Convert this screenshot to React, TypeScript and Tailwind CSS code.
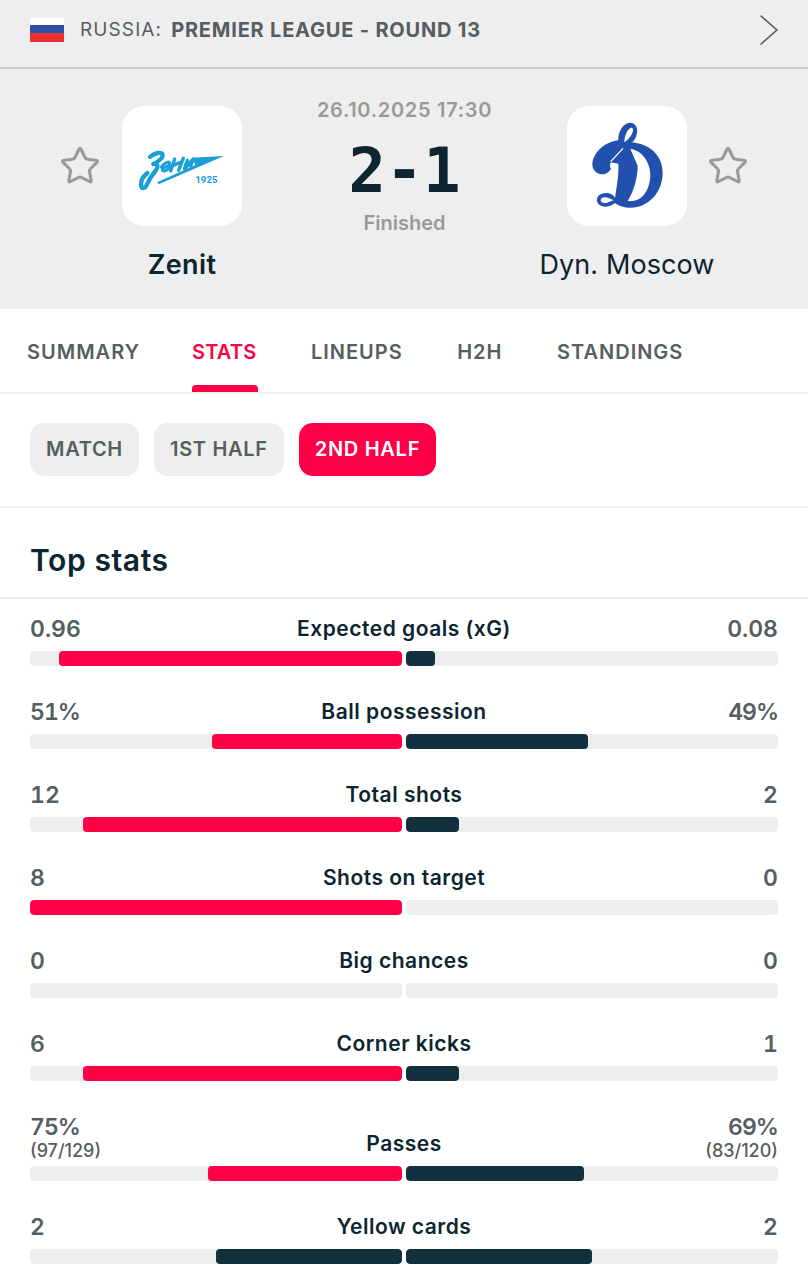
import { Star } from 'lucide-react'
import type { ReactNode } from 'react'

type Stat = {
  label: string
  home: string
  away: string
  homeSub?: string
  awaySub?: string
  homeWidth: number
  awayWidth: number
  homeDark?: boolean
}

const STATS: Stat[] = [
  { label: 'Expected goals (xG)', home: '0.96', away: '0.08', homeWidth: 343, awayWidth: 29 },
  { label: 'Ball possession', home: '51%', away: '49%', homeWidth: 190, awayWidth: 182 },
  { label: 'Total shots', home: '12', away: '2', homeWidth: 319, awayWidth: 53 },
  { label: 'Shots on target', home: '8', away: '0', homeWidth: 372, awayWidth: 0 },
  { label: 'Big chances', home: '0', away: '0', homeWidth: 0, awayWidth: 0 },
  { label: 'Corner kicks', home: '6', away: '1', homeWidth: 319, awayWidth: 53 },
  { label: 'Passes', home: '75%', away: '69%', homeSub: '(97/129)', awaySub: '(83/120)', homeWidth: 194, awayWidth: 178 },
  { label: 'Yellow cards', home: '2', away: '2', homeWidth: 186, awayWidth: 186, homeDark: true },
]

const TABS = ['SUMMARY', 'STATS', 'LINEUPS', 'H2H', 'STANDINGS']

function ZenitLogo() {
  return (
    <svg viewBox="6 3 360 360" className="h-[120px] w-[120px]">
      <g fill="none" stroke="#1c9fd9" strokeLinecap="round" strokeLinejoin="round">
        <path d="M90 156 C102 144 126 138 128 150 C129 162 112 171 100 177 C114 174 116 186 106 198 C94 212 86 226 80 240 C75 252 64 252 63 240 C62 228 70 214 82 204" strokeWidth="13" />
        <path d="M124 186 C134 172 150 166 149 176 C148 184 134 187 127 190 C125 202 138 200 152 186" strokeWidth="9" />
        <path d="M164 162 C160 174 156 186 152 198 M157 182 C168 178 176 174 186 170 M190 160 C184 174 180 186 176 196" strokeWidth="10" />
        <path d="M202 166 C198 176 194 186 194 192 C202 184 210 172 220 162 C216 172 214 178 212 184" strokeWidth="10" />
      </g>
      <polygon points="216,158 312,153 116,238 111,232 226,180" fill="#1c9fd9" />
      <text x="226" y="233" fill="#1c9fd9" fontSize="29" fontWeight="700" fontFamily="Roboto, sans-serif">1925</text>
    </svg>
  )
}

function DynamoLogo() {
  return (
    <svg viewBox="6 3 360 360" className="h-[120px] w-[120px]">
      <path
        fill="#2250ae"
        fillRule="evenodd"
        d="M138 192 C124 216 92 212 83 186 C76 150 118 110 160 106 C158 88 170 58 190 54 C212 50 222 72 214 92 C210 104 204 112 198 112 C252 116 294 150 293 205 C292 265 247 312 190 308 C170 307 158 300 150 294 C135 306 106 312 97 292 C91 274 108 262 128 264 C140 266 146 272 150 278 C156 240 162 205 160 176 L138 172 C134 178 134 186 138 192 Z M196 132 C230 136 258 172 256 215 C252 266 224 292 188 288 C206 258 218 220 218 182 Z M178 112 C190 104 204 88 204 74 C202 62 190 70 184 84 C180 94 178 102 178 112 Z M108 282 C104 290 114 296 124 294 C132 292 140 288 146 286 C134 278 114 272 108 282 Z"
      />
      <path d="M137 170 L174 130" stroke="#ffffff" strokeWidth="4" fill="none" />
    </svg>
  )
}

function ClubBadge({ children }: { children: ReactNode }) {
  return (
    <div className="flex h-[120px] w-[120px] items-center justify-center rounded-[22px] bg-white">
      {children}
    </div>
  )
}

function StatValue({ value, sub }: { value: string; sub?: string }) {
  return (
    <>
      <div className={`text-[23px] leading-[28px] font-semibold text-[#555e61] tabular-nums ${value.endsWith('%') ? 'tracking-[-1px]' : ''}`}>
        {value}
      </div>
      {sub && <div className="mt-[2px] text-[18px] leading-[15px] font-medium text-[#555e61]">{sub}</div>}
    </>
  )
}

function StatRow({ stat }: { stat: Stat }) {
  return (
    <div className="pt-[16px] pb-[16px]">
      <div className="flex items-end justify-between">
        <div className="w-[150px]">
          <StatValue value={stat.home} sub={stat.homeSub} />
        </div>
        <div className="text-[21px] leading-[28px] font-semibold tracking-[0.5px] text-[#0c2530]">{stat.label}</div>
        <div className="w-[150px] text-right">
          <StatValue value={stat.away} sub={stat.awaySub} />
        </div>
      </div>
      <div className="mt-[8px] flex gap-1">
        <div className="flex h-[15px] flex-1 justify-end overflow-hidden rounded-[4px] bg-[#eeeeee]">
          <div
            className={`h-full rounded-[4px] ${stat.homeDark ? 'bg-[#12303d]' : 'bg-[#ff0046]'}`}
            style={{ width: stat.homeWidth }}
          />
        </div>
        <div className="flex h-[15px] flex-1 overflow-hidden rounded-[4px] bg-[#eeeeee]">
          <div className="h-full rounded-[4px] bg-[#12303d]" style={{ width: stat.awayWidth }} />
        </div>
      </div>
    </div>
  )
}

export default function App() {
  return (
    <div className="h-[1280px] w-[808px] overflow-hidden bg-white font-['Inter',sans-serif]">
      {/* League bar */}
      <div className="flex h-[69px] items-center border-b-2 border-[#cccccc] bg-[#eeeeee] px-[30px] pb-[7px]">
        <div className="flex h-[24px] w-[34px] flex-col">
          <div className="h-[7px] bg-white" />
          <div className="h-[8px] bg-[#2f4fa8]" />
          <div className="h-[9px] bg-[#ea2f2f]" />
        </div>
        <div className="ml-4 text-[19px] tracking-[1.1px] text-[#555e61]">RUSSIA:</div>
        <div className="ml-[9px] text-[20px] font-bold tracking-[0.8px] text-[#555e61]">PREMIER LEAGUE - ROUND 13</div>
        <svg viewBox="0 0 18 30" className="ml-auto h-[30px] w-[18px]" fill="none" stroke="#555e61" strokeWidth="1.6" strokeLinecap="round" strokeLinejoin="round">
          <path d="M1 1 L17 15 L1 29" />
        </svg>
      </div>

      {/* Match header */}
      <div className="flex h-[240px] justify-between bg-[#eeeeee] pt-[37px] pr-[59px] pl-[59px]">
        <div className="flex items-start">
          <Star size={42} strokeWidth={1.75} className="mt-[39px] mr-[21px] text-[#999999]" />
          <div className="flex w-[120px] flex-col items-center">
            <ClubBadge><ZenitLogo /></ClubBadge>
            <div className="mt-[20px] text-[27px] leading-[38px] font-semibold tracking-[0.4px] whitespace-nowrap text-[#0c2530]">Zenit</div>
          </div>
        </div>
        <div className="mt-[-8px] flex flex-col items-center">
          <div className="text-[20px] leading-[24px] font-semibold tracking-[0.7px] whitespace-nowrap text-[#999999]">26.10.2025 17:30</div>
          <div className="mt-[14px] font-['DejaVu_Sans_Mono',monospace] text-[62px] leading-[70px] font-bold text-[#0c2530]">2-1</div>
          <div className="mt-[3px] text-[20px] leading-[28px] font-semibold text-[#999999]">Finished</div>
        </div>
        <div className="flex items-start">
          <div className="flex w-[120px] flex-col items-center">
            <ClubBadge><DynamoLogo /></ClubBadge>
            <div className="mt-[20px] text-[27px] leading-[38px] tracking-[0.1px] whitespace-nowrap text-[#0c2530]">Dyn. Moscow</div>
          </div>
          <Star size={42} strokeWidth={1.75} className="mt-[39px] ml-[20px] text-[#999999]" />
        </div>
      </div>

      {/* Tabs */}
      <div className="flex h-[85px] gap-[54.5px] border-b-2 border-[#eeeeee] pl-[27px]">
        {TABS.map((tab) => (
          <div
            key={tab}
            className={`flex flex-col items-start justify-between ${tab === 'STATS' ? '-mr-[1.5px] -ml-[2.5px]' : ''}`}
          >
            <div className={`pt-[29px] text-[20px] leading-[28px] font-semibold ${tab === 'STATS' ? 'tracking-[0.2px] text-[#ff0046]' : 'tracking-[1px] text-[#555e61]'}`}>
              {tab}
            </div>
            {tab === 'STATS' && <div className="h-[7px] w-[66px] rounded-t-[4px] bg-[#ff0046]" />}
          </div>
        ))}
      </div>

      {/* Period filter */}
      <div className="flex h-[114px] gap-[15px] border-b-2 border-[#eeeeee] px-[30px] pt-[29px]">
        <div className="flex h-[53px] items-center rounded-[14px] bg-[#eeeeee] px-4 pb-[1px] text-[20px] font-semibold tracking-[0.7px] text-[#555e61]">MATCH</div>
        <div className="flex h-[53px] items-center rounded-[14px] bg-[#eeeeee] px-4 pb-[1px] text-[20px] font-semibold tracking-[0.7px] text-[#555e61]">1ST HALF</div>
        <div className="flex h-[53px] items-center rounded-[14px] bg-[#ff0046] px-4 pb-[1px] text-[20px] font-semibold tracking-[0.7px] text-white">2ND HALF</div>
      </div>

      {/* Top stats */}
      <div className="flex h-[91px] items-center border-b-2 border-[#eeeeee] px-[30px] pt-[16px]">
        <div className="text-[30px] font-semibold tracking-[0.6px] text-[#0c2530]">Top stats</div>
      </div>
      <div className="px-[30px]">
        {STATS.map((stat) => (
          <StatRow key={stat.label} stat={stat} />
        ))}
      </div>
    </div>
  )
}
